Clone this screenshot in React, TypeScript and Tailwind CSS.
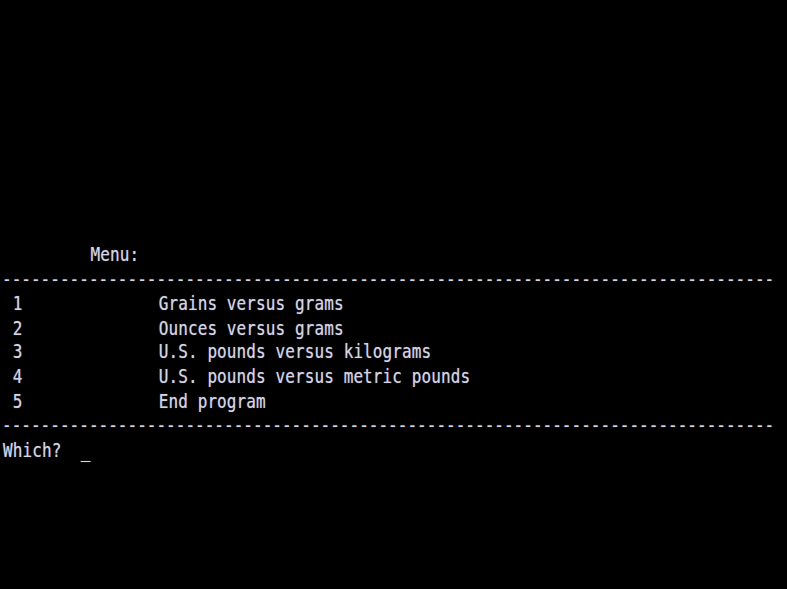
import React from "react";

const DASHES = "-".repeat(80);

const lines: string[] = [
  "         Menu:",
  DASHES,
  " 1              Grains versus grams",
  " 2              Ounces versus grams",
  " 3              U.S. pounds versus kilograms",
  " 4              U.S. pounds versus metric pounds",
  " 5              End program",
  DASHES,
  "Which?  _",
];

export default function App() {
  return (
    <div className="w-[787px] h-[589px] bg-black overflow-hidden pt-[242px] pl-[3px]">
      <div className="origin-top-left scale-y-[1.25] font-['DejaVu_Sans_Mono',monospace] text-[16px] leading-[19.6px] tracking-[0.1px] text-[#d4d4e6] [text-shadow:0_0_1px_rgba(200,200,230,0.6)]">
        {lines.map((l, i) => (
          <div
            key={i}
            className={
              l === DASHES
                ? "whitespace-pre h-[19.6px] tracking-[0.02px] -ml-[1px]"
                : "whitespace-pre h-[19.6px]"
            }
          >
            {l}
          </div>
        ))}
      </div>
    </div>
  );
}
